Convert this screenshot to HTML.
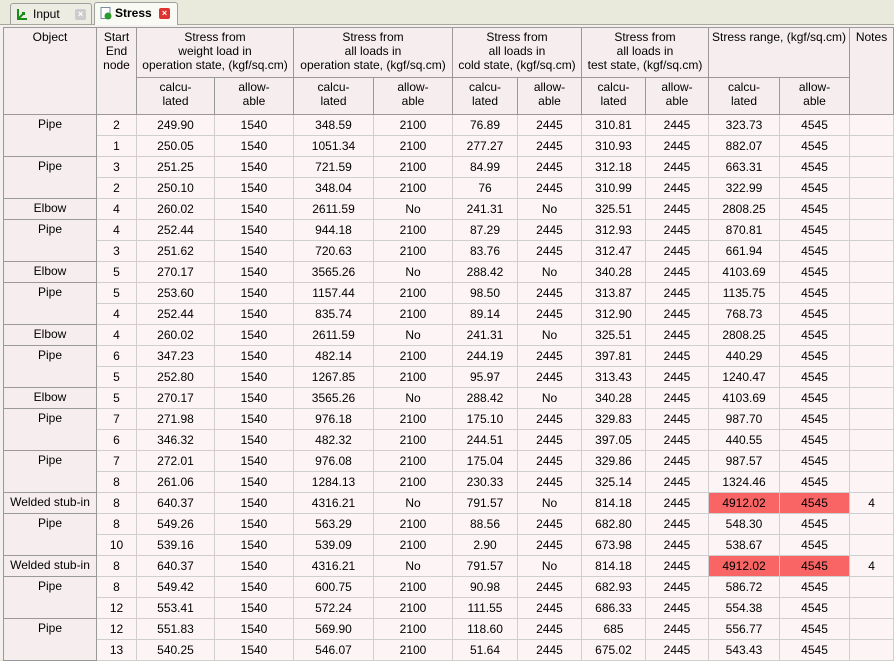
<!DOCTYPE html>
<html><head><meta charset="utf-8"><style>
body{margin:0;width:894px;height:659px;overflow:hidden;background:#e9e9dc;font-family:"Liberation Sans",sans-serif;font-size:12px;color:#000}
.tabs{position:absolute;left:0;top:0;width:894px;height:24px;background:#e9e9dc;border-bottom:1px solid #a8a89a}
.tab{position:absolute;top:3px;height:20px;border:1px solid #a0a0a0;border-bottom:none;border-radius:3px 3px 0 0;line-height:20px;font-size:12px}
.t1{left:10px;width:80px;background:#ecece2}
.t2{left:94px;width:82px;background:#fafaf4;top:2px;height:23px;font-weight:bold}
.ic{position:absolute;top:4px;width:12px;height:13px}
.x{position:absolute;top:5px;width:11px;height:11px;border-radius:2px;color:#fff;font-size:9px;line-height:11px;text-align:center;font-weight:bold}
.wrap{position:absolute;left:0;top:25px;width:894px;height:634px;background:#f5f0f0}
table{position:absolute;left:3px;top:2px;border-collapse:collapse;table-layout:fixed;width:890px}
td,th{border:1px solid #cfcfcf;text-align:center;padding:0;height:20px;font-weight:normal;line-height:14px;overflow:hidden;white-space:nowrap;background:#fdf5f5}
th{background:#f6eeee;border-color:#999;vertical-align:top;padding-top:2px}
td.o{background:#f6eeee;border-color:#999;vertical-align:top;padding-top:2px;height:18px}
td.r{background:#f96464}
</style></head><body>
<div class="tabs">
<div class="tab t1"><svg class="ic" style="left:5px" viewBox="0 0 12 13"><path d="M2 1v10h9M2 11l6-6M6 5h2v2" stroke="#1a8a1a" stroke-width="2" fill="none"/></svg><span style="position:absolute;left:22px">Input</span><div class="x" style="left:64px;background:#ccc">×</div></div>
<div class="tab t2"><svg class="ic" style="left:5px" viewBox="0 0 12 13"><rect x="1" y="0.5" width="9" height="11" fill="#fff" stroke="#7a8aa0"/><circle cx="8" cy="9" r="3.5" fill="#2a9a2a"/></svg><span style="position:absolute;left:20px">Stress</span><div class="x" style="left:64px;background:#d33">×</div></div>
</div>
<div class="wrap">
<table>
<colgroup><col style="width:93px"><col style="width:40px"><col style="width:78px"><col style="width:79px"><col style="width:80px"><col style="width:79px"><col style="width:65px"><col style="width:64px"><col style="width:64px"><col style="width:63px"><col style="width:71px"><col style="width:70px"><col style="width:44px"></colgroup>
<tr style="height:50px"><th rowspan="2">Object</th><th rowspan="2">Start<br>End<br>node</th><th colspan="2">Stress from<br>weight load in<br>operation state, (kgf/sq.cm)</th><th colspan="2">Stress from<br>all loads in<br>operation state, (kgf/sq.cm)</th><th colspan="2">Stress from<br>all loads in<br>cold state, (kgf/sq.cm)</th><th colspan="2">Stress from<br>all loads in<br>test state, (kgf/sq.cm)</th><th colspan="2">Stress range, (kgf/sq.cm)</th><th rowspan="2">Notes</th></tr>
<tr style="height:37px"><th>calcu-<br>lated</th><th>allow-<br>able</th><th>calcu-<br>lated</th><th>allow-<br>able</th><th>calcu-<br>lated</th><th>allow-<br>able</th><th>calcu-<br>lated</th><th>allow-<br>able</th><th>calcu-<br>lated</th><th>allow-<br>able</th></tr>
<tr><td class="o" rowspan="2">Pipe</td><td>2</td><td>249.90</td><td>1540</td><td>348.59</td><td>2100</td><td>76.89</td><td>2445</td><td>310.81</td><td>2445</td><td>323.73</td><td>4545</td><td></td></tr>
<tr><td>1</td><td>250.05</td><td>1540</td><td>1051.34</td><td>2100</td><td>277.27</td><td>2445</td><td>310.93</td><td>2445</td><td>882.07</td><td>4545</td><td></td></tr>
<tr><td class="o" rowspan="2">Pipe</td><td>3</td><td>251.25</td><td>1540</td><td>721.59</td><td>2100</td><td>84.99</td><td>2445</td><td>312.18</td><td>2445</td><td>663.31</td><td>4545</td><td></td></tr>
<tr><td>2</td><td>250.10</td><td>1540</td><td>348.04</td><td>2100</td><td>76</td><td>2445</td><td>310.99</td><td>2445</td><td>322.99</td><td>4545</td><td></td></tr>
<tr><td class="o">Elbow</td><td>4</td><td>260.02</td><td>1540</td><td>2611.59</td><td>No</td><td>241.31</td><td>No</td><td>325.51</td><td>2445</td><td>2808.25</td><td>4545</td><td></td></tr>
<tr><td class="o" rowspan="2">Pipe</td><td>4</td><td>252.44</td><td>1540</td><td>944.18</td><td>2100</td><td>87.29</td><td>2445</td><td>312.93</td><td>2445</td><td>870.81</td><td>4545</td><td></td></tr>
<tr><td>3</td><td>251.62</td><td>1540</td><td>720.63</td><td>2100</td><td>83.76</td><td>2445</td><td>312.47</td><td>2445</td><td>661.94</td><td>4545</td><td></td></tr>
<tr><td class="o">Elbow</td><td>5</td><td>270.17</td><td>1540</td><td>3565.26</td><td>No</td><td>288.42</td><td>No</td><td>340.28</td><td>2445</td><td>4103.69</td><td>4545</td><td></td></tr>
<tr><td class="o" rowspan="2">Pipe</td><td>5</td><td>253.60</td><td>1540</td><td>1157.44</td><td>2100</td><td>98.50</td><td>2445</td><td>313.87</td><td>2445</td><td>1135.75</td><td>4545</td><td></td></tr>
<tr><td>4</td><td>252.44</td><td>1540</td><td>835.74</td><td>2100</td><td>89.14</td><td>2445</td><td>312.90</td><td>2445</td><td>768.73</td><td>4545</td><td></td></tr>
<tr><td class="o">Elbow</td><td>4</td><td>260.02</td><td>1540</td><td>2611.59</td><td>No</td><td>241.31</td><td>No</td><td>325.51</td><td>2445</td><td>2808.25</td><td>4545</td><td></td></tr>
<tr><td class="o" rowspan="2">Pipe</td><td>6</td><td>347.23</td><td>1540</td><td>482.14</td><td>2100</td><td>244.19</td><td>2445</td><td>397.81</td><td>2445</td><td>440.29</td><td>4545</td><td></td></tr>
<tr><td>5</td><td>252.80</td><td>1540</td><td>1267.85</td><td>2100</td><td>95.97</td><td>2445</td><td>313.43</td><td>2445</td><td>1240.47</td><td>4545</td><td></td></tr>
<tr><td class="o">Elbow</td><td>5</td><td>270.17</td><td>1540</td><td>3565.26</td><td>No</td><td>288.42</td><td>No</td><td>340.28</td><td>2445</td><td>4103.69</td><td>4545</td><td></td></tr>
<tr><td class="o" rowspan="2">Pipe</td><td>7</td><td>271.98</td><td>1540</td><td>976.18</td><td>2100</td><td>175.10</td><td>2445</td><td>329.83</td><td>2445</td><td>987.70</td><td>4545</td><td></td></tr>
<tr><td>6</td><td>346.32</td><td>1540</td><td>482.32</td><td>2100</td><td>244.51</td><td>2445</td><td>397.05</td><td>2445</td><td>440.55</td><td>4545</td><td></td></tr>
<tr><td class="o" rowspan="2">Pipe</td><td>7</td><td>272.01</td><td>1540</td><td>976.08</td><td>2100</td><td>175.04</td><td>2445</td><td>329.86</td><td>2445</td><td>987.57</td><td>4545</td><td></td></tr>
<tr><td>8</td><td>261.06</td><td>1540</td><td>1284.13</td><td>2100</td><td>230.33</td><td>2445</td><td>325.14</td><td>2445</td><td>1324.46</td><td>4545</td><td></td></tr>
<tr><td class="o">Welded stub-in</td><td>8</td><td>640.37</td><td>1540</td><td>4316.21</td><td>No</td><td>791.57</td><td>No</td><td>814.18</td><td>2445</td><td class="r">4912.02</td><td class="r">4545</td><td>4</td></tr>
<tr><td class="o" rowspan="2">Pipe</td><td>8</td><td>549.26</td><td>1540</td><td>563.29</td><td>2100</td><td>88.56</td><td>2445</td><td>682.80</td><td>2445</td><td>548.30</td><td>4545</td><td></td></tr>
<tr><td>10</td><td>539.16</td><td>1540</td><td>539.09</td><td>2100</td><td>2.90</td><td>2445</td><td>673.98</td><td>2445</td><td>538.67</td><td>4545</td><td></td></tr>
<tr><td class="o">Welded stub-in</td><td>8</td><td>640.37</td><td>1540</td><td>4316.21</td><td>No</td><td>791.57</td><td>No</td><td>814.18</td><td>2445</td><td class="r">4912.02</td><td class="r">4545</td><td>4</td></tr>
<tr><td class="o" rowspan="2">Pipe</td><td>8</td><td>549.42</td><td>1540</td><td>600.75</td><td>2100</td><td>90.98</td><td>2445</td><td>682.93</td><td>2445</td><td>586.72</td><td>4545</td><td></td></tr>
<tr><td>12</td><td>553.41</td><td>1540</td><td>572.24</td><td>2100</td><td>111.55</td><td>2445</td><td>686.33</td><td>2445</td><td>554.38</td><td>4545</td><td></td></tr>
<tr><td class="o" rowspan="2">Pipe</td><td>12</td><td>551.83</td><td>1540</td><td>569.90</td><td>2100</td><td>118.60</td><td>2445</td><td>685</td><td>2445</td><td>556.77</td><td>4545</td><td></td></tr>
<tr><td>13</td><td>540.25</td><td>1540</td><td>546.07</td><td>2100</td><td>51.64</td><td>2445</td><td>675.02</td><td>2445</td><td>543.43</td><td>4545</td><td></td></tr>
</table>
</div>
</body></html>
